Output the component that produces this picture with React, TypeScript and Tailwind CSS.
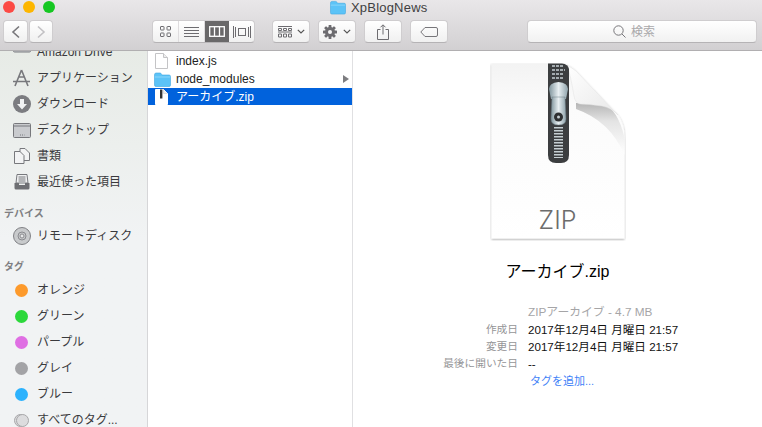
const sans = "font-['Liberation_Sans','Noto_Sans_CJK_JP',sans-serif]";

function Folder({ className }: { className: string }) {
  return (
    <svg className={className} viewBox="0 0 17 15">
      <path d="M0.5 3 Q0.5 1 2 1 H6 Q7 1 7.5 2.2 L8 3 H15 Q16.5 3 16.5 4.5 V13 Q16.5 14.5 15 14.5 H2 Q0.5 14.5 0.5 13 Z" fill="#5cc3f7" stroke="#3fa6e0" strokeWidth="0.6" />
      <path d="M0.8 5 H16.2" stroke="#8bd6fb" strokeWidth="1" />
    </svg>
  );
}

function ToolButton({ className, children }: { className: string; children: React.ReactNode }) {
  return (
    <div className={`h-[23px] flex items-center justify-center rounded-[4px] bg-gradient-to-b from-white to-[#f0f0f0] border border-[#cfcdcf] border-b-[#b5b3b5] ${className}`}>
      {children}
    </div>
  );
}

function Chevron({ left }: { left?: boolean }) {
  return (
    <svg width="10" height="14" viewBox="0 0 10 14" fill="none" stroke={left ? "#77767a" : "#c2c1c4"} strokeWidth="1.6">
      <path d={left ? "M8 1.5 L2 7 L8 12.5" : "M2 1.5 L8 7 L2 12.5"} />
    </svg>
  );
}

function Caret() {
  return (
    <svg width="8" height="5" viewBox="0 0 8 5" fill="none" stroke="#555" strokeWidth="1.2">
      <path d="M0.8 0.8 L4 4 L7.2 0.8" />
    </svg>
  );
}

function Toolbar() {
  return (
    <header className="h-[51px] shrink-0 bg-gradient-to-b from-[#e9e7e9] to-[#d2d0d2] border-b border-[#b1afb1] flex flex-col">
      <div className="h-[14px] flex relative">
        <div className="flex gap-[8px] pl-[3px] h-[14px] items-center">
          <span className="w-[12px] h-[12px] rounded-full bg-[#fc4a45]" />
          <span className="w-[12px] h-[12px] rounded-full bg-[#fdb600]" />
          <span className="w-[12px] h-[12px] rounded-full bg-[#16c722]" />
        </div>
        <div className="absolute left-[330px] -top-[1px] flex items-center gap-[5px] h-[17px]">
          <Folder className="w-[16px] h-[15px]" />
          <span className={`${sans} text-[13px] tracking-[0.2px] text-[#3f3f42]`}>XpBlogNews</span>
        </div>
      </div>
      <div className="flex items-start pt-[6px] pl-[3px]">
        <div className="flex gap-[1px] w-[50px]">
          <ToolButton className="w-[25px]"><Chevron left /></ToolButton>
          <ToolButton className="w-[24px]"><Chevron /></ToolButton>
        </div>
        <div className="ml-[99px] flex w-[103px] h-[23px] rounded-[4px] overflow-hidden border border-[#cfcdcf] border-b-[#b5b3b5] bg-gradient-to-b from-white to-[#f0f0f0]">
          <div className="flex-1 flex items-center justify-center border-r border-[#dedcde]">
            <svg width="11" height="11" viewBox="0 0 11 11" fill="none" stroke="#6d6c70">
              <rect x="0.5" y="0.5" width="3.5" height="3.5" rx="0.5" />
              <rect x="7" y="0.5" width="3.5" height="3.5" rx="0.5" />
              <rect x="0.5" y="7" width="3.5" height="3.5" rx="0.5" />
              <rect x="7" y="7" width="3.5" height="3.5" rx="0.5" />
            </svg>
          </div>
          <div className="flex-1 flex items-center justify-center border-r border-[#dedcde]">
            <svg width="15" height="11" viewBox="0 0 15 11" stroke="#6d6c70">
              <path d="M0 1.5 H15 M0 4.5 H15 M0 7.5 H15 M0 10.5 H15" />
            </svg>
          </div>
          <div className="flex-1 flex items-center justify-center bg-[#696869]">
            <svg width="16" height="11" viewBox="0 0 16 11" fill="none" stroke="#fff" strokeWidth="1.3">
              <rect x="0.7" y="0.7" width="14.6" height="9.6" />
              <path d="M5.5 1 V10 M10.5 1 V10" />
            </svg>
          </div>
          <div className="flex-1 flex items-center justify-center">
            <svg width="18" height="12" viewBox="0 0 18 12" fill="none" stroke="#6d6c70">
              <rect x="5.5" y="2.5" width="7" height="7" />
              <path d="M0.5 0 V12 M2.5 1 V11 M15.5 1 V11 M17.5 0 V12" />
            </svg>
          </div>
        </div>
        <div className="ml-[17px] flex gap-[8px]">
          <ToolButton className="w-[38px] gap-[5px]">
            <svg width="14" height="12" viewBox="0 0 14 12" fill="none" stroke="#6d6c70">
              <path d="M0 0.5 H14 M0 6 H14" />
              <path d="M0.5 2.5 H3.5 V4.5 H0.5 Z M5.5 2.5 H8.5 V4.5 H5.5 Z M10.5 2.5 H13.5 V4.5 H10.5 Z" />
              <path d="M0.5 8 H3.5 V11 H0.5 Z M5.5 8 H8.5 V11 H5.5 Z M10.5 8 H13.5 V11 H10.5 Z" />
            </svg>
            <Caret />
          </ToolButton>
          <ToolButton className="w-[38px] gap-[6px]">
            <svg width="14" height="14" viewBox="0 0 14 14">
              <g fill="#6d6c70">
                <rect x="5.6" y="0" width="2.8" height="14" rx="0.5" />
                <rect x="5.6" y="0" width="2.8" height="14" rx="0.5" transform="rotate(45 7 7)" />
                <rect x="5.6" y="0" width="2.8" height="14" rx="0.5" transform="rotate(90 7 7)" />
                <rect x="5.6" y="0" width="2.8" height="14" rx="0.5" transform="rotate(135 7 7)" />
                <circle cx="7" cy="7" r="5" />
              </g>
              <circle cx="7" cy="7" r="2" fill="#f6f6f6" />
            </svg>
            <Caret />
          </ToolButton>
          <ToolButton className="w-[38px]">
            <svg width="12" height="16" viewBox="0 0 12 16" fill="none" stroke="#6d6c70">
              <path d="M3.5 5.5 H0.5 V15.5 H11.5 V5.5 H8.5 M6 10.5 V1 M3.5 3.3 L6 0.8 L8.5 3.3" />
            </svg>
          </ToolButton>
          <ToolButton className="w-[38px]">
            <svg width="18" height="10" viewBox="0 0 18 10" fill="none" stroke="#77767a">
              <path d="M5 0.5 H16 Q17.5 0.5 17.5 2 V8 Q17.5 9.5 16 9.5 H5 L0.8 5 Z" />
            </svg>
          </ToolButton>
        </div>
        <ToolButton className="ml-[79px] w-[230px] gap-[5px] pr-[16px] from-[#fbfbfb] to-[#f1f1f1]">
          <svg width="13" height="13" viewBox="0 0 13 13" fill="none" stroke="#77767a" strokeWidth="1">
            <circle cx="5.5" cy="5.5" r="4.7" />
            <path d="M9 9 L12.5 12.5" />
          </svg>
          <span className={`${sans} text-[12px] text-[#a9a8aa]`}>検索</span>
        </ToolButton>
      </div>
    </header>
  );
}

function SideIcon({ name }: { name: string }) {
  if (name === "drive") {
    return (
      <svg width="18" height="16" viewBox="0 0 18 16">
        <rect x="0.5" y="0" width="17" height="8" rx="1" fill="#c5c7cb" stroke="#7b7c80" />
      </svg>
    );
  }
  if (name === "apps") {
    return (
      <svg width="19" height="18" viewBox="0 0 19 18" fill="none" stroke="#77787c" strokeWidth="1.6">
        <path d="M9.5 1 L3 17 M9.5 1 L16 17 M1 12.5 H18 M6.5 8 H12.5" />
      </svg>
    );
  }
  if (name === "download") {
    return (
      <svg width="18" height="18" viewBox="0 0 18 18">
        <circle cx="9" cy="9" r="9" fill="#7b7c80" />
        <path d="M7 4 H11 V9 H14 L9 14.5 L4 9 H7 Z" fill="#f0f2f3" />
      </svg>
    );
  }
  if (name === "desktop") {
    return (
      <svg width="18" height="15" viewBox="0 0 18 15">
        <rect x="0.5" y="0.5" width="17" height="14" rx="1" fill="#c9cbce" stroke="#77787c" />
        <path d="M1 3 H17" stroke="#77787c" />
        <path d="M7 12 H11.5" stroke="#77787c" strokeDasharray="1 1" />
      </svg>
    );
  }
  if (name === "docs") {
    return (
      <svg width="16" height="16" viewBox="0 0 16 16" fill="#f2f3f4" stroke="#77787c">
        <path d="M6 0.5 H11 L15.5 5 V12.5 H6 Z" />
        <path d="M0.5 3.5 H6 L10 7.5 V15.5 H0.5 Z" />
      </svg>
    );
  }
  if (name === "recent") {
    return (
      <svg width="16" height="16" viewBox="0 0 16 16">
        <path d="M3 0.5 H13 L14 9 H2 Z" fill="#f0f1f2" stroke="#77787c" />
        <path d="M4.5 3 H11.5 M4.5 5 H11.5 M4.5 7 H11.5" stroke="#77787c" />
        <path d="M0.5 9 H5 V11 H11 V9 H15.5 V14 Q15.5 15.5 14 15.5 H2 Q0.5 15.5 0.5 14 Z" fill="#6e6f73" />
      </svg>
    );
  }
  return (
    <svg width="18" height="18" viewBox="0 0 18 18">
      <circle cx="9" cy="9" r="8.5" fill="#c8cacc" stroke="#808185" />
      <circle cx="9" cy="9" r="4" fill="none" stroke="#8a8b8f" />
      <circle cx="9" cy="9" r="2" fill="#e8e9ea" stroke="#8a8b8f" />
    </svg>
  );
}

const places = [
  { icon: "apps", label: "アプリケーション" },
  { icon: "download", label: "ダウンロード" },
  { icon: "desktop", label: "デスクトップ" },
  { icon: "docs", label: "書類" },
  { icon: "recent", label: "最近使った項目" },
];

const tags = [
  { color: "bg-[#fd9a2c]", label: "オレンジ" },
  { color: "bg-[#2cd83b]", label: "グリーン" },
  { color: "bg-[#df6fe3]", label: "パープル" },
  { color: "bg-[#a3a3a6]", label: "グレイ" },
  { color: "bg-[#2cb2fd]", label: "ブルー" },
];

function SideRow({ icon, children }: { icon: React.ReactNode; children: React.ReactNode }) {
  return (
    <div className="h-[26px] flex items-center">
      <div className="w-[37px] shrink-0 flex justify-center pl-[6px]">{icon}</div>
      <span className="text-[12px] text-[#3a3a3d] whitespace-nowrap">{children}</span>
    </div>
  );
}

function Sidebar() {
  return (
    <aside className={`${sans} w-[148px] shrink-0 overflow-hidden border-r border-[#d6d6d8] bg-gradient-to-b from-[#e7ebe6] via-[#f1f3f4] to-[#f1f3f4]`}>
      <div className="-mt-[12px]">
        <SideRow icon={<SideIcon name="drive" />}>Amazon Drive</SideRow>
        {places.map((p) => (
          <SideRow key={p.label} icon={<SideIcon name={p.icon} />}>{p.label}</SideRow>
        ))}
        <div className="mt-[10px] h-[16px] pl-[4px] flex items-center text-[10px] font-bold text-[#7f7f82]">デバイス</div>
        <div className="mt-[2px]">
          <SideRow icon={<SideIcon name="disc" />}>リモートディスク</SideRow>
        </div>
        <div className="mt-[9px] h-[16px] pl-[4px] flex items-center text-[10px] font-bold text-[#7f7f82]">タグ</div>
        <div className="mt-[3px]">
          {tags.map((t) => (
            <SideRow key={t.label} icon={<span className={`block w-[13px] h-[13px] rounded-full ${t.color}`} />}>{t.label}</SideRow>
          ))}
          <SideRow
            icon={
              <span className="flex">
                <span className="w-[13px] h-[13px] rounded-full bg-[#dcdcde] border border-[#a8a8aa]" />
                <span className="-ml-[11px] w-[13px] h-[13px] rounded-full bg-[#dcdcde] border border-[#a8a8aa]" />
              </span>
            }
          >
            すべてのタグ...
          </SideRow>
        </div>
      </div>
    </aside>
  );
}

function FileIcon({ zip }: { zip?: boolean }) {
  return (
    <svg width="13" height="16" viewBox="0 0 13 16">
      <path d="M0.5 0.5 H8.5 L12.5 4.5 V15.5 H0.5 Z" fill="#fff" stroke={zip ? "#fff" : "#c4c4c6"} />
      <path d="M8.5 0.5 V4.5 H12.5" fill="#eee" stroke={zip ? "#ddd" : "#c4c4c6"} />
      {zip && <rect x="5" y="0.5" width="2.4" height="9" fill="#333" />}
    </svg>
  );
}

function FileColumn() {
  return (
    <section className={`${sans} w-[205px] shrink-0 pt-[1px] border-r border-[#e0e0e2] text-[12px] text-[#222] flex flex-col`}>
      <div className="h-[18px] flex items-center pl-[6px] gap-[7px]">
        <span className="w-[15px] flex justify-center"><FileIcon /></span>
        index.js
      </div>
      <div className="h-[18px] flex items-center pl-[6px] gap-[5px] pr-[3px]">
        <Folder className="w-[17px] h-[15px] shrink-0" />
        <span className="flex-1">node_modules</span>
        <svg width="6" height="8" viewBox="0 0 6 8"><path d="M0 0 L6 4 L0 8 Z" fill="#7d7d80" /></svg>
      </div>
      <div className="h-[17px] flex items-center pl-[6px] gap-[7px] bg-[#0162dc] text-white">
        <span className="w-[15px] flex justify-center"><FileIcon zip /></span>
        アーカイブ.zip
      </div>
    </section>
  );
}

function ZipPreview() {
  return (
    <div className="relative w-[136px] h-[178px]">
      <svg width="136" height="178" viewBox="0 0 136 178">
        <defs>
          <linearGradient id="page" x1="0" y1="0" x2="0" y2="1">
            <stop offset="0" stopColor="#f3f3f3" />
            <stop offset="0.25" stopColor="#fbfbfb" />
            <stop offset="1" stopColor="#ffffff" />
          </linearGradient>
          <linearGradient id="fold" x1="0" y1="0" x2="1" y2="1">
            <stop offset="0" stopColor="#ffffff" />
            <stop offset="1" stopColor="#e8e8e8" />
          </linearGradient>
          <linearGradient id="curl" x1="0" y1="0" x2="0" y2="1">
            <stop offset="0" stopColor="#b5b5b5" />
            <stop offset="0.35" stopColor="#e4e4e4" />
            <stop offset="1" stopColor="#ffffff" />
          </linearGradient>
          <linearGradient id="pull" x1="0" y1="0" x2="1" y2="0">
            <stop offset="0" stopColor="#7f949c" />
            <stop offset="0.5" stopColor="#e8eff2" />
            <stop offset="1" stopColor="#8fa3ab" />
          </linearGradient>
          <filter id="soft" x="-10%" y="-10%" width="120%" height="120%">
            <feDropShadow dx="0" dy="1" stdDeviation="1.2" floodColor="#000" floodOpacity="0.35" />
          </filter>
        </defs>
        <path d="M1.5 0.5 H72 Q79 1 86 8 L128 52 Q134.5 60 134.5 75 V175.5 H1.5 Z" fill="url(#page)" filter="url(#soft)" />
        <path d="M86 40 H112 Q128 46 134.5 75 V92 Q120 58 86 46 Z" fill="url(#curl)" />
        <path d="M77 2 Q82 5 86 8 L128 52 Q122 45 112 43 Q98 41 90 41 Q85 40 84 33 Q81 14 77 2 Z" fill="url(#fold)" stroke="#e2e2e2" strokeWidth="0.5" />
        <path d="M58 0.5 H72 Q78 1 79 6 V92 Q79 100 71 100 H66 Q58 100 58 92 Z" fill="#3c3e40" />
        <path d="M62 3 H74 M62 7 H75 M62 11 H74 M62 15 H74" stroke="#c6cfd3" strokeWidth="1.6" strokeDasharray="3 1" />
        <path d="M68.5 64 V95" stroke="#c6cfd3" strokeWidth="9" strokeDasharray="1.4 1.6" />
        <path d="M59 26 Q59 20 68.5 19 Q78 20 78 26 L76 36 H61 Z" fill="url(#pull)" />
        <path d="M62 34 H75 L76 56 Q76 62 68.5 62 Q61 62 61 56 Z" fill="url(#pull)" stroke="#6d7d84" strokeWidth="0.5" />
        <circle cx="68.5" cy="54" r="4.5" fill="#2e3032" />
        <circle cx="68.5" cy="54" r="1.5" fill="#c7d0d4" />
      </svg>
      <span className="font-['Inter',sans-serif] font-light absolute left-0 right-0 bottom-[6px] text-center text-[25px] leading-[30px] text-[#6c6c6c]">ZIP</span>
    </div>
  );
}

const meta = [
  { label: "作成日", value: "2017年12月4日 月曜日 21:57" },
  { label: "変更日", value: "2017年12月4日 月曜日 21:57" },
  { label: "最後に開いた日", value: "--" },
];

function Preview() {
  return (
    <section className={`${sans} flex-1 flex flex-col items-center pt-[12px] bg-white`}>
      <ZipPreview />
      <div className="mt-[19px] h-[24px] leading-[24px] text-[16px] text-black">アーカイブ.zip</div>
      <div className="mt-[20px] w-full grid grid-cols-[165px_1fr] auto-rows-[17px] gap-x-[10px] text-[11.6px] leading-[17px]">
        <span />
        <span className="text-[11.8px] text-[#a5a5a7]">ZIPアーカイブ - 4.7 MB</span>
        {meta.map((m) => (
          <div key={m.label} className="contents">
            <span className="text-right text-[10.7px] text-[#959597]">{m.label}</span>
            <span className="text-[#111]">{m.value}</span>
          </div>
        ))}
        <span />
        <span className="pl-[2px] pt-[1px] text-[11px] text-[#3f82f7]">タグを追加...</span>
      </div>
    </section>
  );
}

export default function App() {
  return (
    <div className="w-[762px] h-[427px] overflow-hidden flex flex-col bg-white">
      <Toolbar />
      <main className="flex-1 flex min-h-0">
        <Sidebar />
        <FileColumn />
        <Preview />
      </main>
    </div>
  );
}
